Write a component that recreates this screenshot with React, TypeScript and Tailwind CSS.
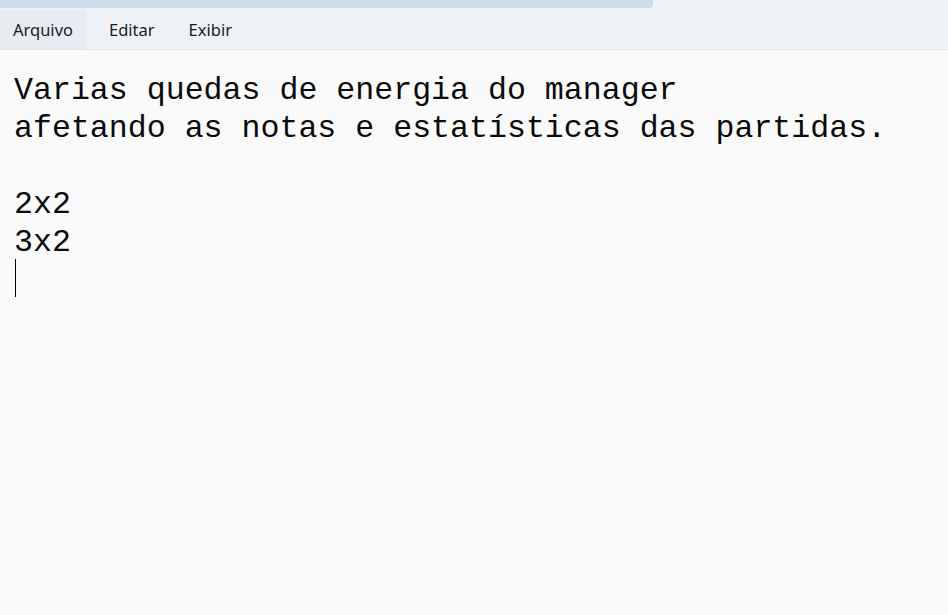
import React from "react";

export default function App() {
  const lines = [
    "Varias quedas de energia do manager",
    "afetando as notas e estatísticas das partidas.",
    "",
    "2x2",
    "3x2",
  ];
  return (
    <div className="w-[948px] h-[615px] bg-[#fafafa] flex flex-col overflow-hidden">
      <div className="bg-[#eef2f7] border-b border-[#e2e5ea] flex flex-col">
        <div className="w-[653px] h-[8px] bg-[#cbdcea] rounded-br-[4px]" />
        <div
          className="h-[41px] flex items-stretch text-[16.5px] text-[#1b1b1b]"
          style={{ fontFamily: '"Noto Sans", "Open Sans", sans-serif' }}
        >
          <div className="w-[86px] mt-[2px] flex items-center pl-[13px] bg-[#e8ecf2] rounded-[4px] pt-[1px]">
            Arquivo
          </div>
          <div className="ml-[23px] flex items-center pt-[3px]">Editar</div>
          <div className="ml-[34px] flex items-center pt-[3px]">Exibir</div>
        </div>
      </div>
      <div
        className="pl-[14px] pt-[22px] text-[31.6px] leading-[38px] text-[#0a0a0a] whitespace-pre"
        style={{ fontFamily: '"Liberation Mono", "DejaVu Sans Mono", monospace' }}
      >
        {lines.map((l, i) => (
          <div key={i} className="h-[38px]">
            {l}
          </div>
        ))}
        <div className="h-[38px] -mt-[3px] flex items-stretch pl-[1px]">
          <div className="w-px bg-black" />
        </div>
      </div>
    </div>
  );
}
